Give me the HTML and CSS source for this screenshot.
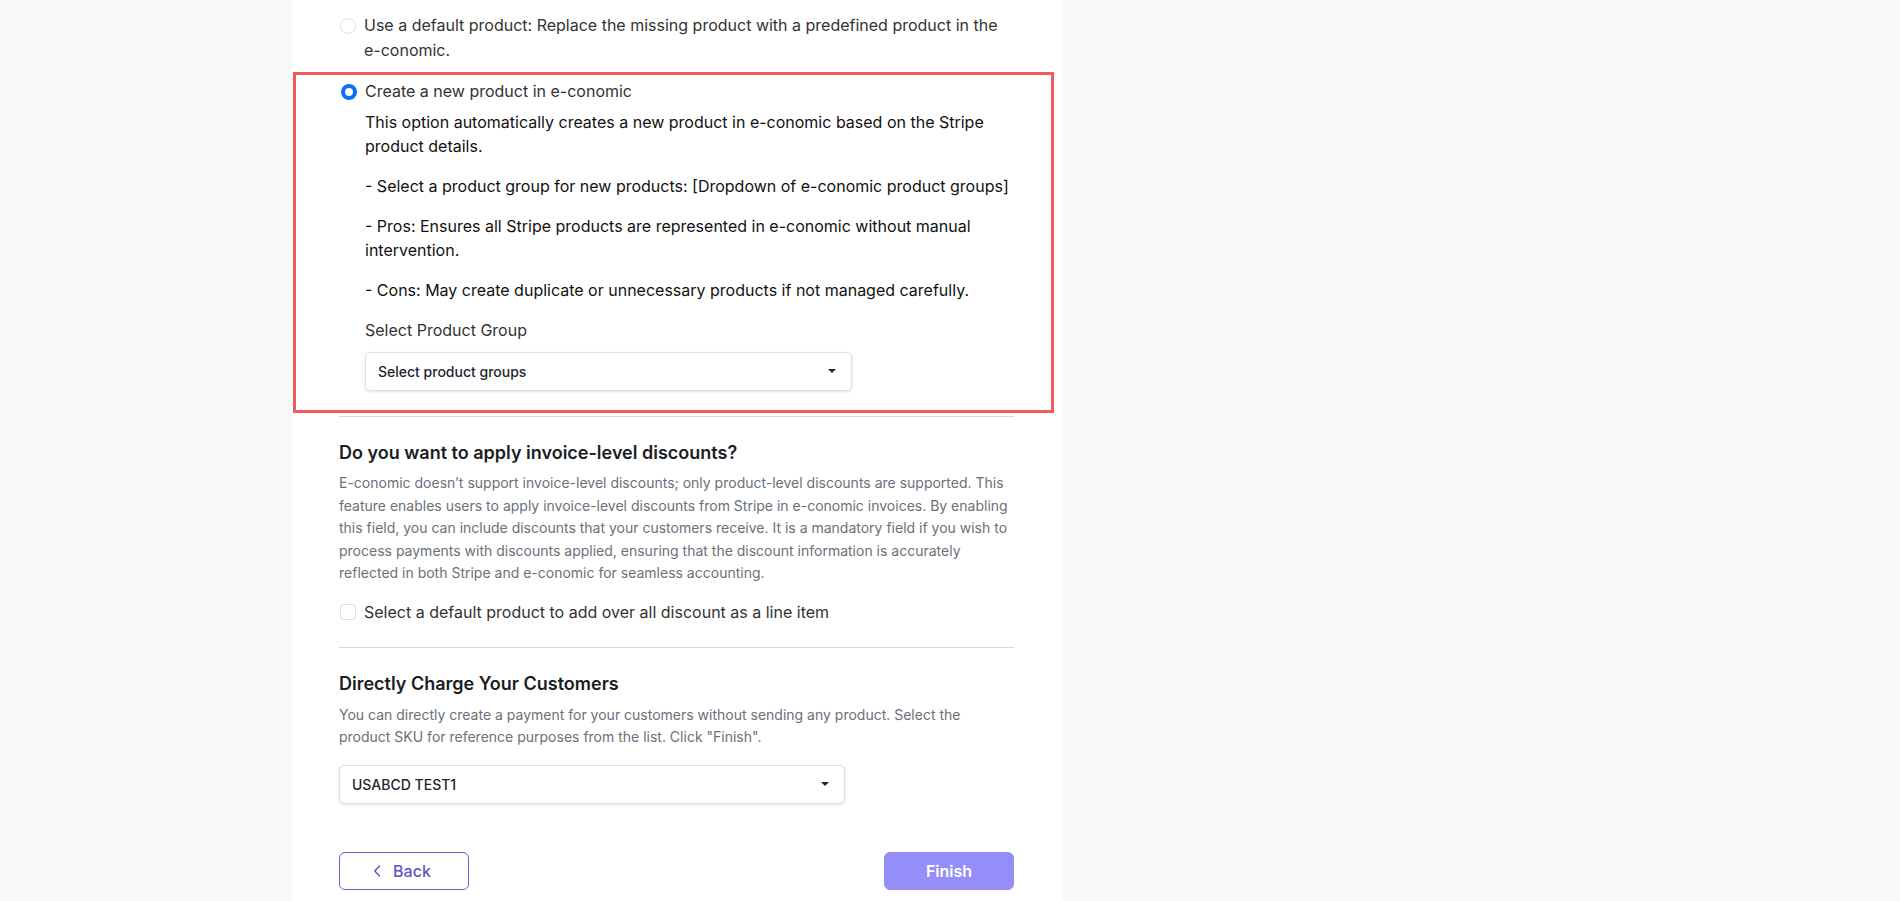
FILE: index.html
```html
<!DOCTYPE html>
<html lang="en">
<head>
<meta charset="utf-8">
<title>Product settings</title>
<link rel="stylesheet" href="styles.css">
</head>
<body>
<div class="page">
  <main class="card">
    <div class="option">
      <span class="radio"></span>
      <div class="option-body">
        <div class="option-label">Use a default product: Replace the missing product with a predefined product in the e-conomic.</div>
      </div>
    </div>

    <div class="highlight">
      <div class="option">
        <span class="radio checked"></span>
        <div class="option-body">
          <div class="option-label">Create a new product in e-conomic</div>
          <p class="desc first">This option automatically creates a new product in e-conomic based on the Stripe product details.</p>
          <p class="desc">- Select a product group for new products: [Dropdown of e-conomic product groups]</p>
          <p class="desc">- Pros: Ensures all Stripe products are represented in e-conomic without manual intervention.</p>
          <p class="desc">- Cons: May create duplicate or unnecessary products if not managed carefully.</p>
          <div class="field-label">Select Product Group</div>
          <div class="select select-group">
            <span>Select product groups</span>
            <span class="caret"></span>
          </div>
        </div>
      </div>
    </div>

    <hr class="divider first-divider">

    <section class="section">
      <h2 class="section-title">Do you want to apply invoice-level discounts?</h2>
      <p class="section-text">E-conomic doesn’t support invoice-level discounts; only product-level discounts are supported. This feature enables users to apply invoice-level discounts from Stripe in e-conomic invoices. By enabling this field, you can include discounts that your customers receive. It is a mandatory field if you wish to process payments with discounts applied, ensuring that the discount information is accurately reflected in both Stripe and e-conomic for seamless accounting.</p>
      <label class="check-row">
        <span class="checkbox"></span>
        <span>Select a default product to add over all discount as a line item</span>
      </label>
    </section>

    <hr class="divider second-divider">

    <section class="section">
      <h2 class="section-title">Directly Charge Your Customers</h2>
      <p class="section-text">You can directly create a payment for your customers without sending any product. Select the product SKU for reference purposes from the list. Click "Finish".</p>
      <div class="select select-sku">
        <span>USABCD TEST1</span>
        <span class="caret"></span>
      </div>
    </section>

    <div class="actions">
      <button class="btn btn-back" type="button">
        <svg class="chev" width="8" height="12" viewBox="0 0 8 12" aria-hidden="true"><path d="M6.5 1 L1.8 6 L6.5 11" fill="none" stroke="currentColor" stroke-width="1.4" stroke-linecap="round" stroke-linejoin="round"/></svg>
        <span>Back</span>
      </button>
      <button class="btn btn-finish" type="button">Finish</button>
    </div>
  </main>
</div>
</body>
</html>
```

FILE: styles.css
```css
* { box-sizing: border-box; }

html, body {
  margin: 0;
  padding: 0;
  height: 100%;
}

body {
  background: #f8f9fb;
  font-family: "Inter", "Liberation Sans", sans-serif;
  color: #2b2b2b;
  overflow: hidden;
}

.page {
  display: flex;
  min-height: 100vh;
}

.card {
  margin-left: 292px;
  width: 770px;
  min-height: 100vh;
  background: #ffffff;
  padding: 13px 48px 0 47px;
}

.option {
  display: flex;
  align-items: flex-start;
  gap: 8px;
}

.option-body {
  flex: 1;
  min-width: 0;
}

.option-label {
  font-size: 16px;
  line-height: 24.5px;
  color: #333333;
}

.radio {
  flex: none;
  width: 16px;
  height: 16px;
  margin-top: 5px;
  margin-left: 1px;
  border-radius: 50%;
  border: 1px solid #dcdfe3;
  background: #fff;
}

.radio.checked {
  border: 4.5px solid #0d6efd;
  background: #fff;
}

.highlight {
  margin: 10px -40px 0 -46px;
  border: 3px solid #ef5b5f;
  padding: 4px 37px 19px 44px;
}

.desc {
  margin: 16px 0 0;
  font-size: 16px;
  line-height: 24px;
  color: #111111;
}

.desc.first {
  margin-top: 6px;
}

.field-label {
  margin-top: 16.5px;
  font-size: 16px;
  line-height: 24px;
  color: #333333;
}

.select {
  display: flex;
  align-items: center;
  justify-content: space-between;
  height: 39px;
  border: 1px solid #dde0e4;
  border-radius: 5px;
  background: #fff;
  box-shadow: 0 1px 3px rgba(0, 0, 0, 0.12);
  font-size: 14px;
  font-weight: 500;
  color: #1f2530;
  padding: 0 15px 0 12px;
}

.select-group {
  margin-top: 9.5px;
  width: 487px;
}

.select-sku {
  margin-top: 16px;
  width: 506px;
  height: 39px;
}

.caret {
  width: 0;
  height: 0;
  border-left: 4px solid transparent;
  border-right: 4px solid transparent;
  border-top: 4px solid #222;
}

.divider {
  border: 0;
  border-top: 1px solid #d5d8dc;
  margin: 0;
  height: 0;
}

.first-divider { margin-top: 3px; }
.second-divider { margin-top: 23.5px; }

.section-title {
  margin: 22px 0 0;
  font-size: 18px;
  line-height: 28px;
  font-weight: 600;
  color: #1a1d23;
}

.section-text {
  margin: 5.5px 0 0;
  font-size: 14px;
  line-height: 22.5px;
  color: #6b7079;
}

.check-row {
  display: flex;
  align-items: center;
  gap: 8px;
  margin-top: 15px;
  font-size: 16px;
  line-height: 24px;
  color: #333333;
}

.checkbox {
  flex: none;
  width: 16px;
  height: 16px;
  margin-left: 1px;
  border: 1px solid #dcdfe3;
  border-radius: 4px;
  background: #fff;
}

.actions {
  display: flex;
  justify-content: space-between;
  margin-top: 48px;
}

.btn {
  width: 130px;
  height: 38px;
  border-radius: 6px;
  font-family: "Inter", "Liberation Sans", sans-serif;
  font-size: 16px;
  font-weight: 500;
  display: flex;
  align-items: center;
  justify-content: center;
  cursor: pointer;
}

.btn-back {
  background: #fff;
  border: 1px solid #6a60d4;
  color: #5d54c8;
  gap: 12px;
  padding-right: 10px;
}

.chev { display: block; }

.btn-finish {
  background: #958df8;
  border: 1px solid #958df8;
  color: #ffffff;
  font-weight: 600;
}
```
